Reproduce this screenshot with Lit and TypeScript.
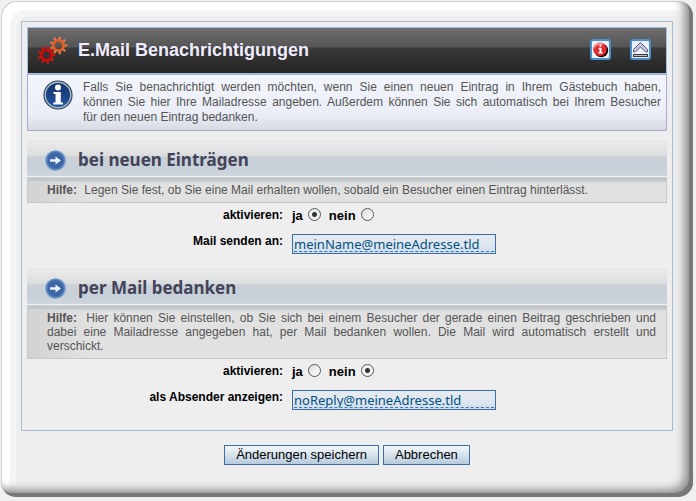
import { LitElement, html, css, svg } from "lit";
import { customElement, property } from "lit/decorators.js";

const gear = (cx: number, cy: number, color: string, edge: string) => svg`
  <g transform="translate(${cx} ${cy})">
    <g stroke=${edge} stroke-width="2.2">
      ${[10, 50, 90, 130, 170, 210, 250, 290, 330].map(
        (a) => svg`<line x1="0" y1="-5" x2="0" y2="-8.8" transform="rotate(${a})"></line>`
      )}
    </g>
    <circle r="5" fill="none" stroke=${color} stroke-width="2.8"></circle>
    <circle r="5.6" fill="none" stroke=${edge} stroke-width="1"></circle>
  </g>`;

const gearsIcon = html`<svg width="32" height="28" viewBox="0 0 32 28" aria-hidden="true">
  ${gear(21.5, 9.5, "#d4521c", "#e67c48")} ${gear(9.5, 19, "#b80808", "#d81616")}
</svg>`;

const infoIcon = html`<svg width="30" height="30" viewBox="0 0 30 30" aria-hidden="true">
  <defs>
    <linearGradient id="blue" x1="0" y1="0" x2="0" y2="1">
      <stop offset="0" stop-color="#16336a"></stop>
      <stop offset="1" stop-color="#2456a0"></stop>
    </linearGradient>
  </defs>
  <circle cx="15" cy="15" r="14.6" fill="#2b3f58"></circle>
  <circle cx="15" cy="15" r="12.8" fill="url(#blue)" stroke="#a9bacd" stroke-width="1.4"></circle>
  <circle cx="15" cy="7.6" r="3" fill="#fff"></circle>
  <path d="M10.5 12H17.8V22.5H20V24.6H10.3V22.5H12.5V14H10.5Z" fill="#fff"></path>
</svg>`;

const arrowIcon = html`<svg width="21" height="21" viewBox="0 0 21 21" aria-hidden="true">
  <circle cx="10.5" cy="10.5" r="10.3" fill="#6f93c4"></circle>
  <circle cx="10.5" cy="10.5" r="8.4" fill="#3d66a5" stroke="#4a76b4" stroke-width="1"></circle>
  <path d="M5 9.2H10.5V6.5L16 10.5L10.5 14.5V11.8H5Z" fill="#e9f1fb"></path>
</svg>`;

const alertIcon = html`<svg width="21" height="21" viewBox="0 0 21 21" aria-hidden="true">
  <rect x="1" y="1" width="19" height="19" rx="2" fill="#eef2fb" stroke="#4a90cc" stroke-width="2"></rect>
  <circle cx="11.3" cy="11.3" r="6.9" fill="#1a0505"></circle>
  <circle cx="10" cy="10.2" r="6.8" fill="#e02c30"></circle>
  <path d="M4 10A6 6 0 0 1 14.5 5.5A9 9 0 0 0 4 10Z" fill="#f49a9a"></path>
  <path d="M9.5 5.5H11.5V7.5H9.5ZM8.7 8.7H11.5V13H12.5V14.5H8.5V13H9.5V10.2H8.7Z" fill="#fff"></path>
</svg>`;

const collapseIcon = html`<svg width="21" height="21" viewBox="0 0 21 21" aria-hidden="true">
  <rect x="1" y="1" width="19" height="19" rx="2" fill="#eef2fb" stroke="#4a90cc" stroke-width="2"></rect>
  <path d="M10.5 3.5L17.5 10.5V12.8H15.5L10.5 8L5.5 12.8H3.5V10.5Z" fill="#c3c6ea" stroke="#55565f" stroke-width="1"></path>
  <rect x="3.5" y="15.5" width="14" height="2" fill="#b9bcc0" stroke="#3a3a3e" stroke-width="1"></rect>
</svg>`;

@customElement("mail-section")
export class MailSection extends LitElement {
  @property() heading = "";
  @property() help = "";
  @property() field = "";
  @property() address = "";
  @property({ type: Boolean }) active = false;

  static styles = css`
    :host {
      display: block;
      margin-top: 10px;
    }
    .title {
      display: flex;
      align-items: center;
      gap: 12px;
      height: 36px;
      box-sizing: border-box;
      padding: 2px 18px 0;
      border-top: 1px solid #e4e4e4;
      border-bottom: 1px solid #f2f2f2;
      background: linear-gradient(#eaeaea, #dcdedf 38%, #c9d0d8 46%, #c8d0d9 80%, #cfd6dc);
    }
    h2 {
      margin: 0;
      font: bold 17px/22px "Noto Sans", Tahoma, sans-serif;
      color: #434358;
    }
    .help {
      margin: 0;
      padding: 6px 10px 5px 19px;
      border: 1px solid #c8c8c8;
      border-top: 0;
      background:
        linear-gradient(#c9cdd0, #bcc4ca 3px, #d5d8da 5px, transparent 6px),
        linear-gradient(90deg, #d2d2d2, #e1e1e1 60px);
      font: 12px/14px "Liberation Sans", Arial, sans-serif;
      color: #555;
      text-align: justify;
    }
    .help b {
      margin-right: 4px;
    }
    .form {
      display: grid;
      grid-template-columns: 40% 1fr;
      column-gap: 9px;
      row-gap: 6px;
      padding: 3px 0 5px;
      font: bold 12px/20px "Liberation Sans", Arial, sans-serif;
      color: #000;
    }
    .name {
      text-align: right;
      line-height: 18px;
    }
    .choices {
      display: flex;
      gap: 8px;
      font-size: 13px;
    }
    .choices label {
      display: flex;
      gap: 5px;
    }
    .choices input {
      appearance: none;
      width: 13px;
      height: 13px;
      margin: 2px 0 0;
      border: 1px solid #4f5a66;
      border-radius: 50%;
      background: linear-gradient(135deg, #dcdcd8, #fff);
    }
    .choices input:checked {
      background: radial-gradient(circle, #333 2px, #f2f2f0 3px);
    }
    .box {
      box-sizing: border-box;
      width: 204px;
      height: 20px;
      margin-top: 2px;
      padding: 1px;
      border: 1px solid #3a6ea8;
      background: linear-gradient(#e6eaf0, #dfe6ef 60%, #cfdcea);
    }
    .box input {
      display: block;
      box-sizing: border-box;
      width: 100%;
      height: 16px;
      padding: 0;
      border: 0;
      border-bottom: 1px dashed #3f78ae;
      background: none;
      outline: 0;
      font: 13px/15px "Noto Sans", Tahoma, sans-serif;
      color: #005080;
    }
  `;

  render() {
    return html`
      <div class="title">${arrowIcon}<h2>${this.heading}</h2></div>
      <p class="help"><b>Hilfe:</b> ${this.help}</p>
      <div class="form">
        <span class="name" id="active">aktivieren:</span>
        <div class="choices" role="radiogroup" aria-labelledby="active">
          <label>ja <input type="radio" name="active" .checked=${this.active} /></label>
          <label>nein <input type="radio" name="active" .checked=${!this.active} /></label>
        </div>
        <label class="name" for="address">${this.field}</label>
        <div class="box"><input id="address" type="text" .value=${this.address} /></div>
      </div>
    `;
  }
}

@customElement("app-root")
export class AppRoot extends LitElement {
  static styles = css`
    :host {
      display: block;
      padding: 1px 3px 4px 1px;
      background: #f0f0f0;
      font-family: "Liberation Sans", Arial, sans-serif;
    }
    .frame {
      padding: 20px;
      padding-bottom: 32px;
      border-radius: 15px;
      background: #eee;
      box-shadow:
        inset -4px -4px 1px #777,
        inset -8px -7px 6px #999,
        inset -12px -10px 8px #d4d4d4,
        inset 1px 1px 0 #d2d0d1,
        inset 9px 9px 1px #fff,
        inset 15px 15px 0 #f5f5f5;
    }
    .panel {
      padding: 5px 5px 15px;
      border: 1px solid #a9bbcf;
    }
    header {
      display: flex;
      align-items: center;
      height: 47px;
      box-sizing: border-box;
      padding: 0 15px 2px 9px;
      border: 1px solid #a0c0ea;
      background: linear-gradient(#6e6e6e, #555 19px, #3a3a3a 20px, #232323);
    }
    h1 {
      flex: 1;
      margin: 0 0 0 9px;
      font-size: 18px;
      line-height: 22px;
      color: #f0ecff;
    }
    .tool {
      display: block;
      margin-left: 19px;
      padding: 0;
      border: 0;
      background: none;
      line-height: 0;
    }
    .intro {
      display: flex;
      gap: 10px;
      padding: 5px;
      padding-left: 15px;
      border: 1px solid #a9aad0;
      background: linear-gradient(#f2f5fb, #ebeef6 70%, #d8dae4);
    }
    .intro p {
      flex: 1;
      margin: 0;
      font-size: 12px;
      line-height: 15px;
      color: #555;
      text-align: justify;
    }
    .actions {
      display: flex;
      justify-content: center;
      gap: 4px;
      margin-top: 14px;
    }
    .actions button {
      height: 20px;
      padding: 0 11px;
      border: 1px solid #3a6ea8;
      background: linear-gradient(#f4f8fb, #d6e2ec 50%, #b6cbdc);
      font: 13px/18px "Liberation Sans", Arial, sans-serif;
      color: #000;
    }
  `;

  render() {
    return html`
      <form class="frame" @submit=${(e: Event) => e.preventDefault()}>
        <div class="panel">
          <header>
            ${gearsIcon}
            <h1>E.Mail Benachrichtigungen</h1>
            <button class="tool" type="button" aria-label="Information">${alertIcon}</button>
            <button class="tool" type="button" aria-label="Einklappen">${collapseIcon}</button>
          </header>
          <div class="intro">
            ${infoIcon}
            <p>
              Falls Sie benachrichtigt werden möchten, wenn Sie einen neuen Eintrag in Ihrem
              Gästebuch haben, können&nbsp;Sie hier Ihre Mailadresse angeben. Außerdem können Sie
              sich automatisch bei Ihrem Besucher für&nbsp;den&nbsp;neuen Eintrag bedanken.
            </p>
          </div>
          <mail-section
            heading="bei neuen Einträgen"
            help="Legen Sie fest, ob Sie eine Mail erhalten wollen, sobald ein Besucher einen Eintrag hinterlässt."
            field="Mail senden an:"
            address="meinName@meineAdresse.tld"
            active
          ></mail-section>
          <mail-section
            heading="per Mail bedanken"
            help="Hier können Sie einstellen, ob Sie sich bei einem Besucher der gerade einen Beitrag geschrieben und dabei eine Mailadresse angegeben hat, per Mail bedanken wollen. Die Mail wird automatisch erstellt und verschickt."
            field="als Absender anzeigen:"
            address="noReply@meineAdresse.tld"
          ></mail-section>
        </div>
        <div class="actions">
          <button type="submit">Änderungen speichern</button>
          <button type="reset">Abbrechen</button>
        </div>
      </form>
    `;
  }
}
